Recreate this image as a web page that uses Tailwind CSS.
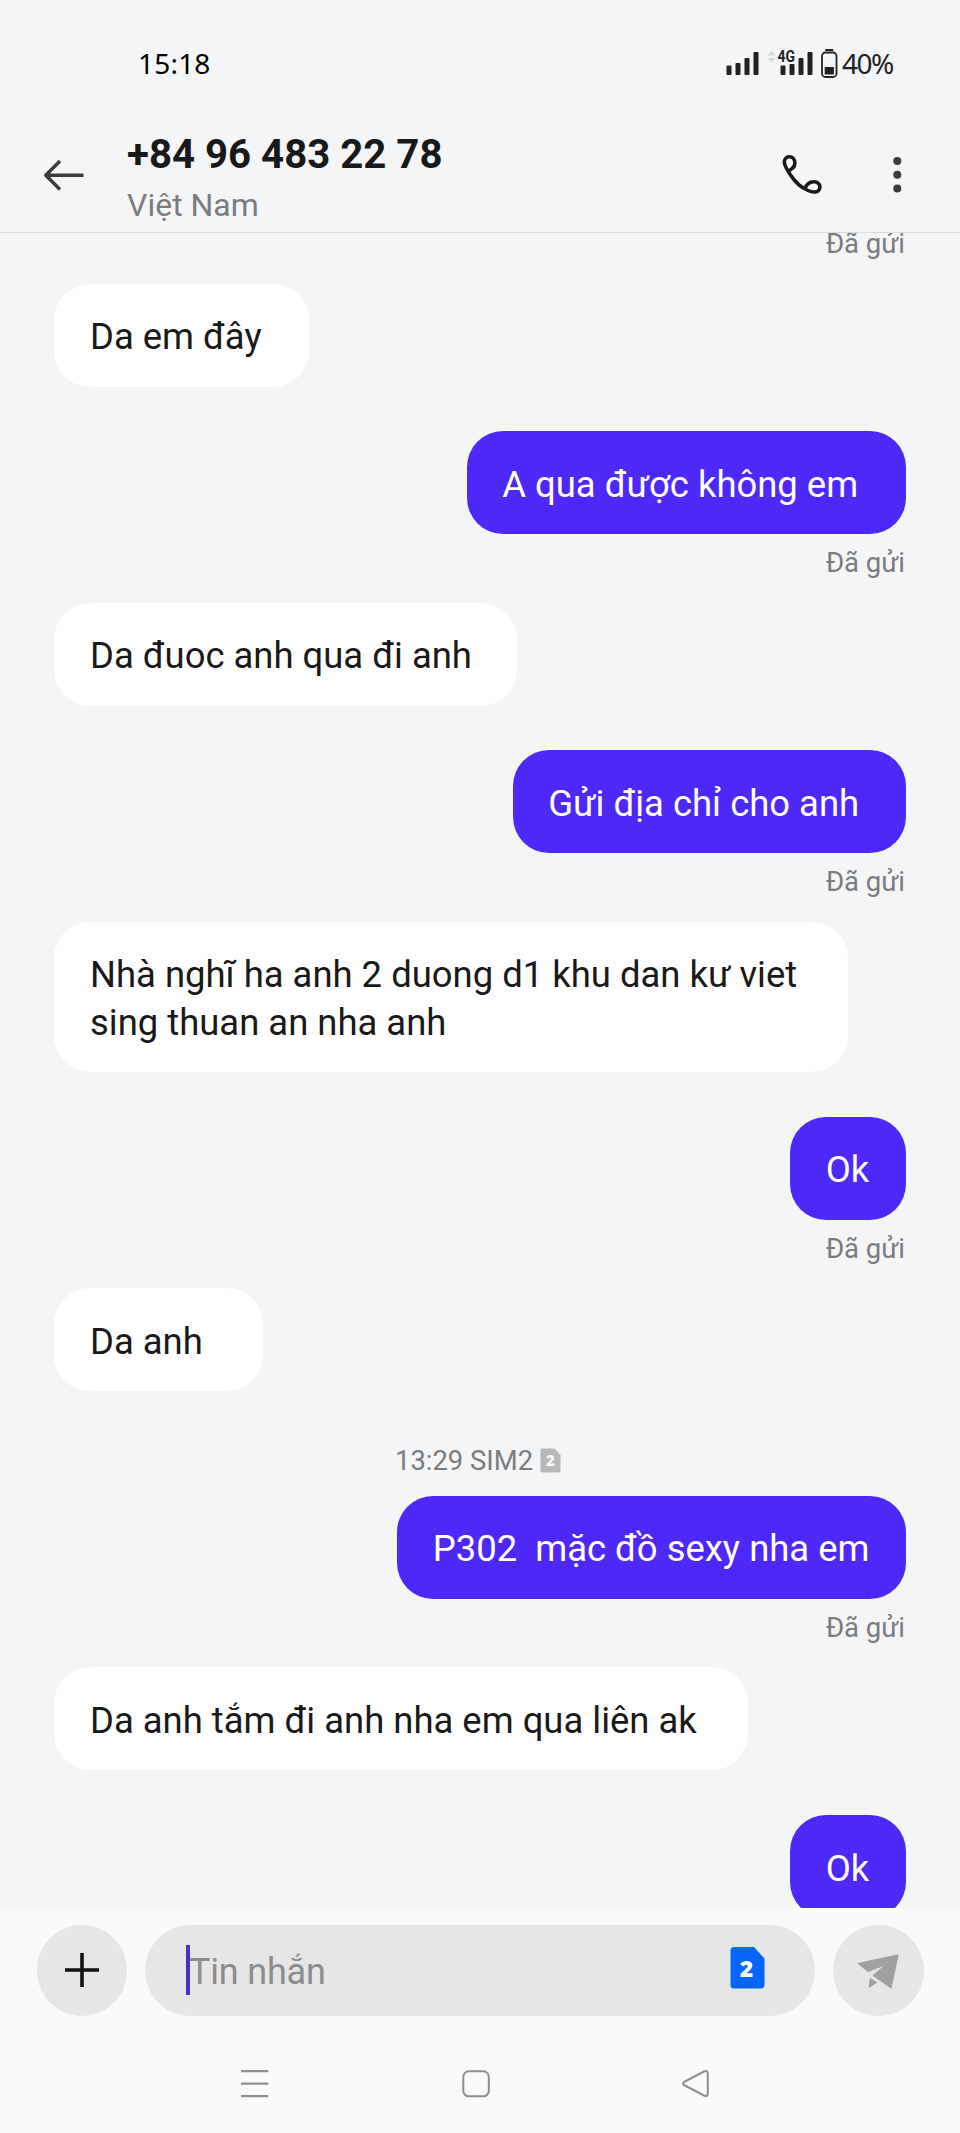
<!DOCTYPE html>
<html lang="vi">
<head>
<meta charset="utf-8">
<title>Tin nhắn</title>
<script src="https://cdn.jsdelivr.net/npm/@tailwindcss/browser@4"></script>
</head>
<body class="bg-[#f4f5f7]">
<div class="w-[960px] h-[2133px] flex flex-col overflow-hidden bg-[#f4f5f7] font-['Roboto','Noto_Sans',sans-serif] text-[#191919]">

  <!-- Status bar -->
  <div class="h-[110px] shrink-0 flex items-start justify-between pl-[138px] pr-[67px] pt-[43px] font-['Noto_Sans',sans-serif]">
    <span class="text-[28px] leading-[40px] tracking-[0.200px] text-black">15:18</span>
    <div class="flex items-start">
      <svg class="w-[118px] h-[40px] mt-[1px]" viewBox="724 44 118 40" fill="#222">
        <rect x="726.5" y="65.500" width="5" height="9.500" rx="1"/>
        <rect x="735.500" y="63" width="5" height="12" rx="1"/>
        <rect x="744.500" y="58" width="5" height="17" rx="1"/>
        <rect x="753.500" y="52" width="5" height="23" rx="1"/>
        <path d="M767.500 55.500L771.500 50.500L775.500 55.500ZM767.500 58L771.500 62.500L775.500 58Z" fill="#d4d5d6"/>
        <text x="777.500" y="62" font-family="Roboto" font-weight="700" font-size="16" textLength="17.500" lengthAdjust="spacingAndGlyphs">4G</text>
        <rect x="780.500" y="65.500" width="5" height="9.500" rx="1"/>
        <rect x="789.500" y="64" width="5" height="11" rx="1"/>
        <rect x="798.500" y="58" width="5" height="17" rx="1"/>
        <rect x="807.500" y="52" width="5" height="23" rx="1"/>
        <rect x="825" y="49" width="8.500" height="2" rx="1"/>
        <rect x="822" y="52.500" width="14.500" height="24.500" rx="3.500" fill="none" stroke="#222" stroke-width="1.800"/>
        <rect x="824.700" y="67" width="9.200" height="7.500"/>
      </svg>
      <span class="text-[28px] leading-[40px] tracking-[-1.400px] text-[#222]">40%</span>
    </div>
  </div>

  <!-- Conversation header -->
  <div class="h-[123px] shrink-0 flex border-b border-[#d9dbdd]">
    <svg class="w-[42px] h-[34px] ml-[43px] mt-[48px]" viewBox="43 158 42 34" fill="none" stroke="#3c3c3c" stroke-width="3.500">
      <path d="M83.500 175.300H45.500M60 161L45.800 175.300L60 189.500" stroke-linejoin="round"/>
    </svg>
    <div class="ml-[42px] mt-[21px] flex flex-col">
      <span class="text-[40.200px] leading-[48px] font-bold">+84 96 483 22 78</span>
      <span class="text-[32px] leading-[40px] mt-[6px] text-[#7b7c7e]">Việt Nam</span>
    </div>
    <svg class="w-[42px] h-[42px] ml-auto mt-[44px]" viewBox="781 154 42 42" fill="none" stroke="#191919" stroke-width="3.500" stroke-linejoin="round">
      <path d="M789.500 170.500C794.500 167.500 796 164.500 794.500 160.500C793 156.500 788 155.500 785.500 158.500C782.500 162 785.500 167 789.500 173.500C794 180.500 800.500 187.500 808 190.500C813.500 193 818.500 192.500 819.700 188.500C820.800 184.500 817.500 181.500 813.500 181.700C809.500 181.800 806.500 184.500 805 188.500"/>
    </svg>
    <svg class="w-[10px] h-[38px] ml-[69px] mr-[58px] mt-[46px]" viewBox="892 156 10 38" fill="#3c3c3c">
      <circle cx="897.300" cy="161" r="4"/><circle cx="897.300" cy="174.700" r="4"/><circle cx="897.300" cy="188.500" r="4"/>
    </svg>
  </div>

  <!-- Messages -->
  <main class="h-[1674.500px] shrink-0 overflow-hidden pl-[54px] pr-[54.500px] text-[36.450px] leading-[47.200px]">
    <div class="flex flex-col -mt-[18px]">
      <div class="h-[68.500px] shrink-0 pt-[13.300px] pr-[0.500px] text-right text-[27.500px] leading-[32px] text-[#7b7c7e]">Đã gửi</div>
      <div class="self-start w-[254.500px] h-[103px] shrink-0 rounded-[36px] bg-white pl-[36px] pt-[29.700px] whitespace-nowrap">Da em đây</div>

      <div class="self-end w-[439px] h-[103px] shrink-0 mt-[44.600px] rounded-[36px] bg-[#4e28f8] pl-[35.700px] pt-[29.700px] whitespace-nowrap text-white">A qua được không em</div>
      <div class="h-[68.500px] shrink-0 pt-[13.300px] pr-[0.500px] text-right text-[27.500px] leading-[32px] text-[#7b7c7e]">Đã gửi</div>
      <div class="self-start w-[462.500px] h-[103px] shrink-0 rounded-[36px] bg-white pl-[36px] pt-[29.700px] whitespace-nowrap">Da đuoc anh qua đi anh</div>

      <div class="self-end w-[393px] h-[103px] shrink-0 mt-[44.600px] rounded-[36px] bg-[#4e28f8] pl-[35.700px] pt-[29.700px] whitespace-nowrap text-white">Gửi địa chỉ cho anh</div>
      <div class="h-[68.500px] shrink-0 pt-[13.300px] pr-[0.500px] text-right text-[27.500px] leading-[32px] text-[#7b7c7e]">Đã gửi</div>
      <div class="self-start w-[794px] h-[150.500px] shrink-0 rounded-[36px] bg-white pl-[36px] pt-[29.700px] whitespace-nowrap">Nhà nghĩ ha anh 2 duong d1 khu dan kư viet<br>sing thuan an nha anh</div>

      <div class="self-end w-[115.500px] h-[103px] shrink-0 mt-[44.400px] rounded-[36px] bg-[#4e28f8] pl-[35.700px] pt-[29.700px] whitespace-nowrap text-white">Ok</div>
      <div class="h-[68.500px] shrink-0 pt-[13.300px] pr-[0.500px] text-right text-[27.500px] leading-[32px] text-[#7b7c7e]">Đã gửi</div>
      <div class="self-start w-[208.500px] h-[103px] shrink-0 rounded-[36px] bg-white pl-[36px] pt-[29.700px] whitespace-nowrap">Da anh</div>

      <div class="h-[104.700px] shrink-0 flex items-start pt-[53.700px] pl-[341px] text-[27.400px] leading-[32px] text-[#7b7c7e]">
        <span>13:29 SIM2</span>
        <svg class="w-[21px] h-[25px] ml-[7px] mt-[3px]" viewBox="0 0 21 25">
          <path d="M2 0.500H14.500L20.500 7V22.500Q20.500 24.500 18.500 24.500H2Q0.500 24.500 0.500 22.500V2.500Q0.500 0.500 2 0.500Z" fill="#b7b8ba"/>
          <text x="10.300" y="18.300" text-anchor="middle" font-family="Open Sans" font-weight="800" font-size="15" fill="#f7f7f8">2</text>
        </svg>
      </div>
      <div class="self-end w-[508.500px] h-[103px] shrink-0 rounded-[36px] bg-[#4e28f8] pl-[35.700px] pt-[29.700px] whitespace-pre text-white">P302  mặc đồ sexy nha em</div>
      <div class="h-[68.500px] shrink-0 pt-[13.300px] pr-[0.500px] text-right text-[27.500px] leading-[32px] text-[#7b7c7e]">Đã gửi</div>
      <div class="self-start w-[694px] h-[103px] shrink-0 rounded-[36px] bg-white pl-[36px] pt-[29.700px] whitespace-nowrap">Da anh tắm đi anh nha em qua liên ak</div>

      <div class="self-end w-[115.500px] h-[103px] shrink-0 mt-[44.600px] rounded-[36px] bg-[#4e28f8] pl-[35.700px] pt-[29.700px] whitespace-nowrap text-white">Ok</div>
    </div>
  </main>

  <!-- Composer and navigation -->
  <footer class="flex-1 bg-[#fafafa]">
    <div class="flex pl-[36.500px] pt-[17.500px]">
      <div class="size-[90.500px] rounded-full bg-[#e6e6e6] flex items-center justify-center">
        <svg class="size-[36px]" viewBox="0 0 36 36" stroke="#111" stroke-width="3.600"><path d="M1 18H35M18 1V35"/></svg>
      </div>
      <div class="ml-[18px] w-[670px] h-[90.500px] rounded-full bg-[#e6e6e6] flex items-start pl-[40.500px] pr-[50px] pt-[20px]">
        <div class="w-[4.700px] h-[50px] bg-[#4b2fcb]"></div>
        <span class="-ml-[1.200px] text-[36px] leading-[48px] pt-[2.500px] tracking-[-0.200px] text-[#8c8c8c]">Tin nhắn</span>
        <svg class="w-[35px] h-[42px] ml-auto mt-[2px]" viewBox="0 0 35 42">
          <path d="M4 0H24L34.500 11.500V38Q34.500 41.500 31 41.500H4Q0.500 41.500 0.500 38V3.500Q0.500 0 4 0Z" fill="#0666fb"/>
          <text x="16.600" y="30.300" text-anchor="middle" font-family="Open Sans" font-weight="800" font-size="23" fill="#fff">2</text>
        </svg>
      </div>
      <div class="ml-[18px] size-[90.500px] rounded-full bg-[#e6e6e6]">
        <svg class="size-[90px]" viewBox="833 1925 90 90" fill="#a0a0a0" stroke="#a0a0a0" stroke-width="1" stroke-linejoin="round">
          <path d="M858 1963.500L898.200 1954.800L891 1988L873 1975.500L886 1964.500L868 1971.500Z"/>
          <path d="M870.300 1978.500L876.500 1982.500L869.300 1987.300Z"/>
        </svg>
      </div>
    </div>
    <div class="flex pt-[53px] pl-[240px]">
      <svg class="w-[29px] h-[30px]" viewBox="240 2069 29 30" stroke="#8f8f8f" stroke-width="2.200"><path d="M241 2071.200H268.300M241 2083.600H268.300M241 2096.200H268.300"/></svg>
      <svg class="w-[30px] h-[30px] ml-[192px]" viewBox="461 2069 30 30" fill="none" stroke="#8f8f8f" stroke-width="2"><rect x="463.300" y="2071.300" width="25.500" height="25" rx="5.500"/></svg>
      <svg class="w-[30px] h-[30px] ml-[190px]" viewBox="681 2069 30 30" fill="none" stroke="#8f8f8f" stroke-width="2" stroke-linejoin="round"><path d="M684 2082Q682 2083.500 684 2085L704 2095.500Q707.800 2097 707.800 2093.500V2073.500Q707.800 2070 704 2071.500Z"/></svg>
    </div>
  </footer>
</div>
</body>
</html>
